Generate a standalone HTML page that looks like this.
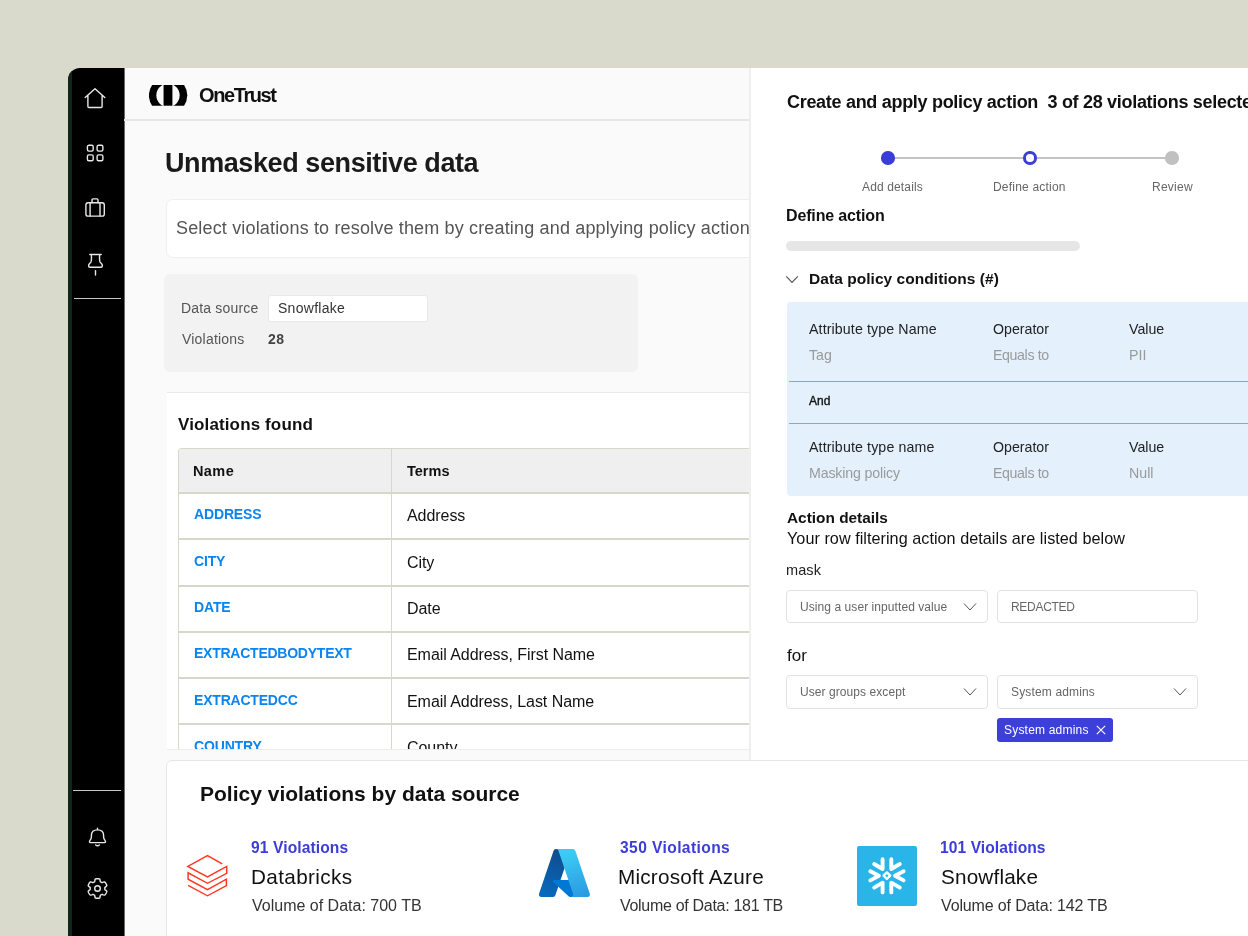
<!DOCTYPE html>
<html><head><meta charset="utf-8">
<style>
*{box-sizing:border-box;margin:0;padding:0}
html,body{width:1248px;height:936px;overflow:hidden;background:#d9d9cc;font-family:"Liberation Sans",sans-serif;color:#111;position:relative}
.abs{position:absolute}
.t{position:absolute;white-space:nowrap;line-height:1;will-change:transform}
</style></head><body>
<div class="abs" style="left:124px;top:68px;width:626px;height:868px;background:#fafafa"></div>
<div class="abs" style="left:124px;top:68px;width:1px;height:868px;background:#6a6a6a"></div>
<div class="abs" style="left:68px;top:68px;width:56px;height:868px;background:#000;border-top-left-radius:12px;overflow:hidden"><div class="abs" style="left:0;top:0;width:4.2px;height:868px;background:#10261a"></div></div>
<svg class="abs" style="left:84px;top:87px" width="22" height="22" viewBox="0 0 22 22"><path d="M1.2 10.6 L11 1.8 L20.8 10.6 M3.9 8.3 V19.5 Q3.9 20.5 4.9 20.5 H17.1 Q18.1 20.5 18.1 19.5 V8.3" fill="none" stroke="#e8e8e8" stroke-width="1.4" stroke-linejoin="round" stroke-linecap="round"/></svg>
<svg class="abs" style="left:85px;top:144px" width="20" height="19" viewBox="0 0 20 19"><rect x="2.4" y="1.2" width="5.8" height="5.9" rx="1.5" fill="none" stroke="#e8e8e8" stroke-width="1.4" stroke-linejoin="round" stroke-linecap="round"/><rect x="12.1" y="1.2" width="5.8" height="5.9" rx="1.5" fill="none" stroke="#e8e8e8" stroke-width="1.4" stroke-linejoin="round" stroke-linecap="round"/><rect x="2.4" y="10.9" width="5.8" height="5.9" rx="1.5" fill="none" stroke="#e8e8e8" stroke-width="1.4" stroke-linejoin="round" stroke-linecap="round"/><rect x="12.1" y="10.9" width="5.8" height="5.9" rx="1.5" fill="none" stroke="#e8e8e8" stroke-width="1.4" stroke-linejoin="round" stroke-linecap="round"/></svg>
<svg class="abs" style="left:84px;top:197px" width="22" height="22" viewBox="0 0 22 22"><rect x="1.9" y="5.8" width="18.4" height="13.3" rx="2.2" fill="none" stroke="#e8e8e8" stroke-width="1.4" stroke-linejoin="round" stroke-linecap="round"/><path d="M8.0 5.8 V2.9 Q8.0 1.9 9.0 1.9 H13.0 Q14.0 1.9 14.0 2.9 V5.8 M6.1 5.8 V19.1 M16.0 5.8 V19.1" fill="none" stroke="#e8e8e8" stroke-width="1.4" stroke-linejoin="round" stroke-linecap="round"/></svg>
<svg class="abs" style="left:86px;top:252.5px" width="18" height="24" viewBox="0 0 18 24"><path d="M3.8 1.5 H15.2 M5.3 1.5 Q5.8 6 5 9 Q2.6 11 2.6 12.8 Q2.6 14.3 4.1 14.3 H14.9 Q16.4 14.3 16.4 12.8 Q16.4 11 14 9 Q13.2 6 13.7 1.5 M9.5 17.6 V22.1" fill="none" stroke="#e8e8e8" stroke-width="1.4" stroke-linejoin="round" stroke-linecap="round"/></svg>
<div class="abs" style="left:73.5px;top:298.2px;width:47.5px;height:1.2px;background:#c8c8c8"></div>
<div class="abs" style="left:73px;top:789.6px;width:47.7px;height:1.2px;background:#c8c8c8"></div>
<svg class="abs" style="left:87px;top:827px" width="21" height="22" viewBox="0 0 21 22"><path d="M10.5 1.3 V2.6 M2.9 13.6 Q4.4 12.2 4.4 9.8 V8.6 Q4.4 2.9 10.5 2.9 Q16.6 2.9 16.6 8.6 V9.8 Q16.6 12.2 18.1 13.6 Q19.3 15.6 17.4 15.6 H3.6 Q1.7 15.6 2.9 13.6 Z M8.7 18 Q10.5 19.6 12.3 18" fill="none" stroke="#e8e8e8" stroke-width="1.4" stroke-linejoin="round" stroke-linecap="round"/></svg>
<svg class="abs" style="left:86.6px;top:878.2px" width="21" height="21" viewBox="0 0 21 21"><path d="M17.80 10.50 L17.79 10.82 L17.77 11.14 L17.83 11.47 L18.27 11.87 L18.93 12.37 L19.53 12.92 L19.81 13.43 L19.71 13.85 L19.55 14.25 L19.38 14.64 L19.19 15.03 L18.99 15.40 L18.77 15.77 L18.53 16.12 L18.27 16.47 L18.01 16.80 L17.69 17.09 L17.11 17.11 L16.33 16.86 L15.57 16.54 L15.00 16.37 L14.69 16.48 L14.42 16.66 L14.15 16.82 L13.87 16.98 L13.59 17.12 L13.33 17.33 L13.20 17.91 L13.10 18.73 L12.92 19.53 L12.61 20.03 L12.20 20.15 L11.78 20.22 L11.35 20.26 L10.93 20.29 L10.50 20.30 L10.07 20.29 L9.65 20.26 L9.22 20.22 L8.80 20.15 L8.39 20.03 L8.08 19.53 L7.90 18.73 L7.80 17.91 L7.67 17.33 L7.41 17.12 L7.13 16.98 L6.85 16.82 L6.58 16.66 L6.31 16.48 L6.00 16.37 L5.43 16.54 L4.67 16.86 L3.89 17.11 L3.31 17.09 L2.99 16.80 L2.73 16.47 L2.47 16.12 L2.23 15.77 L2.01 15.40 L1.81 15.03 L1.62 14.64 L1.45 14.25 L1.29 13.85 L1.19 13.43 L1.47 12.92 L2.07 12.37 L2.73 11.87 L3.17 11.47 L3.23 11.14 L3.21 10.82 L3.20 10.50 L3.21 10.18 L3.23 9.86 L3.17 9.53 L2.73 9.13 L2.07 8.63 L1.47 8.08 L1.19 7.57 L1.29 7.15 L1.45 6.75 L1.62 6.36 L1.81 5.97 L2.01 5.60 L2.23 5.23 L2.47 4.88 L2.73 4.53 L2.99 4.20 L3.31 3.91 L3.89 3.89 L4.67 4.14 L5.43 4.46 L6.00 4.63 L6.31 4.52 L6.58 4.34 L6.85 4.18 L7.13 4.02 L7.41 3.88 L7.67 3.67 L7.80 3.09 L7.90 2.27 L8.08 1.47 L8.39 0.97 L8.80 0.85 L9.22 0.78 L9.65 0.74 L10.07 0.71 L10.50 0.70 L10.93 0.71 L11.35 0.74 L11.78 0.78 L12.20 0.85 L12.61 0.97 L12.92 1.47 L13.10 2.27 L13.20 3.09 L13.33 3.67 L13.59 3.88 L13.87 4.02 L14.15 4.18 L14.42 4.34 L14.69 4.52 L15.00 4.63 L15.57 4.46 L16.33 4.14 L17.11 3.89 L17.69 3.91 L18.01 4.20 L18.27 4.53 L18.53 4.88 L18.77 5.23 L18.99 5.60 L19.19 5.97 L19.38 6.36 L19.55 6.75 L19.71 7.15 L19.81 7.57 L19.53 8.08 L18.93 8.63 L18.27 9.13 L17.83 9.53 L17.77 9.86 L17.79 10.18 Z" fill="none" stroke="#e8e8e8" stroke-width="1.4" stroke-linejoin="round" stroke-linecap="round"/><circle cx="10.5" cy="10.5" r="2.8" fill="none" stroke="#e8e8e8" stroke-width="1.4" stroke-linejoin="round" stroke-linecap="round"/></svg>
<div class="abs" style="left:124px;top:119px;width:626px;height:2px;background:#e6e6e6"></div>
<svg class="abs" style="left:148.95px;top:84.5px" width="39" height="21" viewBox="0 0 39 21"><path d="M3.1 0 H35.1 Q38.3 5 38.3 10.35 Q38.3 15.7 35.1 20.7 H3.1 Q-0.1 15.7 -0.1 10.35 Q-0.1 5 3.1 0 Z" fill="#000"/><ellipse cx="19" cy="10.35" rx="11.65" ry="11.75" fill="#f9f9f9"/><rect x="14.56" y="0" width="8.85" height="20.7" fill="#000"/></svg>
<div class="t" style="left:199.00px;top:84.87px;font-size:20px;font-weight:700;color:#111;letter-spacing:-1.4px;">OneTrust</div>
<div class="t" style="left:165.10px;top:150.14px;font-size:27px;font-weight:700;color:#1a1a1a;letter-spacing:-0.41px;">Unmasked sensitive data</div>
<div class="abs" style="left:166px;top:199px;width:590px;height:58.5px;background:#fff;border:1px solid #efefef;border-radius:7px"></div>
<div class="t" style="left:176.30px;top:218.76px;font-size:18px;color:#555;letter-spacing:0.16px;">Select violations to resolve them by creating and applying policy action</div>
<div class="abs" style="left:164px;top:274px;width:474px;height:97.5px;background:#f2f2f2;border-radius:6px"></div>
<div class="t" style="left:181.00px;top:300.75px;font-size:14px;color:#555;letter-spacing:0.18px;">Data source</div>
<div class="abs" style="left:267.5px;top:295px;width:160px;height:26.6px;background:#fff;border:1px solid #e9e9e9;border-radius:3px"></div>
<div class="t" style="left:278.00px;top:300.75px;font-size:14px;color:#333;letter-spacing:0.28px;">Snowflake</div>
<div class="t" style="left:181.60px;top:332.15px;font-size:14px;color:#555;letter-spacing:0.2px;">Violations</div>
<div class="t" style="left:268.00px;top:332.15px;font-size:14px;font-weight:700;color:#444;letter-spacing:0.5px;">28</div>
<div class="abs" style="left:167px;top:391.8px;width:600px;height:357.5px;background:#fff;border-top:1px solid #e9e9e9"></div>
<div class="t" style="left:178.40px;top:415.61px;font-size:17px;font-weight:700;color:#111;letter-spacing:0.13px;">Violations found</div>
<div class="abs" style="left:177.9px;top:448.2px;width:600px;height:302px;border:1.3px solid #d8d8ca;border-bottom:none;border-top-left-radius:4px;overflow:hidden;background:#fff"></div>
<div class="abs" style="left:178.8px;top:449.0px;width:600px;height:44px;background:#efefef;border-top-left-radius:3px"></div>
<div class="abs" style="left:177.8px;top:492.3px;width:600px;height:1.4px;background:#d8d8ca"></div>
<div class="abs" style="left:390.8px;top:449.0px;width:1.3px;height:300px;background:#d8d8ca"></div>
<div class="t" style="left:193.00px;top:463.73px;font-size:14.5px;font-weight:700;color:#111;letter-spacing:0.4px;">Name</div>
<div class="t" style="left:406.90px;top:463.73px;font-size:14.5px;font-weight:700;color:#111;">Terms</div>
<div class="abs" style="left:177.8px;top:538.25px;width:600px;height:1.5px;background:#d8d8ca"></div>
<div class="t" style="left:193.60px;top:507.45px;font-size:14px;font-weight:700;color:#0a84f0;letter-spacing:-0.15px;">ADDRESS</div>
<div class="t" style="left:406.90px;top:508.46px;font-size:16px;color:#111;letter-spacing:-0.06px;">Address</div>
<div class="abs" style="left:177.8px;top:585.25px;width:600px;height:1.5px;background:#d8d8ca"></div>
<div class="t" style="left:193.60px;top:553.72px;font-size:14px;font-weight:700;color:#0a84f0;letter-spacing:-0.15px;">CITY</div>
<div class="t" style="left:406.90px;top:554.73px;font-size:16px;color:#111;letter-spacing:-0.06px;">City</div>
<div class="abs" style="left:177.8px;top:631.25px;width:600px;height:1.5px;background:#d8d8ca"></div>
<div class="t" style="left:193.60px;top:599.99px;font-size:14px;font-weight:700;color:#0a84f0;letter-spacing:-0.15px;">DATE</div>
<div class="t" style="left:406.90px;top:601.00px;font-size:16px;color:#111;letter-spacing:-0.06px;">Date</div>
<div class="abs" style="left:177.8px;top:677.25px;width:600px;height:1.5px;background:#d8d8ca"></div>
<div class="t" style="left:193.60px;top:646.26px;font-size:14px;font-weight:700;color:#0a84f0;letter-spacing:-0.245px;">EXTRACTEDBODYTEXT</div>
<div class="t" style="left:406.90px;top:647.27px;font-size:16px;color:#111;letter-spacing:-0.06px;">Email Address, First Name</div>
<div class="abs" style="left:177.8px;top:723.25px;width:600px;height:1.5px;background:#d8d8ca"></div>
<div class="t" style="left:193.60px;top:692.53px;font-size:14px;font-weight:700;color:#0a84f0;letter-spacing:-0.2px;">EXTRACTEDCC</div>
<div class="t" style="left:406.90px;top:693.54px;font-size:16px;color:#111;letter-spacing:-0.06px;">Email Address, Last Name</div>
<div class="t" style="left:193.60px;top:738.80px;font-size:14px;font-weight:700;color:#0a84f0;letter-spacing:-0.15px;">COUNTRY</div>
<div class="t" style="left:406.90px;top:739.81px;font-size:16px;color:#111;letter-spacing:-0.06px;">County</div>
<div class="abs" style="left:125px;top:749.5px;width:625px;height:11px;background:#fafafa"></div>
<div class="abs" style="left:167px;top:749px;width:583px;height:1px;background:#ededed"></div>
<div class="abs" style="left:749px;top:68px;width:499px;height:692px;background:#fff;border-left:2px solid #efefef"></div>
<div class="t" style="left:786.60px;top:93.06px;font-size:18px;font-weight:700;color:#111;letter-spacing:-0.3px;">Create and apply policy action&nbsp; 3 of 28 violations selected</div>
<div class="abs" style="left:888px;top:157.4px;width:284px;height:1.2px;background:#c4c4c4"></div>
<div class="abs" style="left:881.2px;top:151.3px;width:13.5px;height:13.5px;background:#3b3dd6;border-radius:50%"></div>
<div class="abs" style="left:1023.3px;top:151.3px;width:13.5px;height:13.5px;background:#fff;border:3.1px solid #3b3dd6;border-radius:50%"></div>
<div class="abs" style="left:1165px;top:151.3px;width:13.5px;height:13.5px;background:#c0c0c0;border-radius:50%"></div>
<div class="t" style="left:862.30px;top:180.64px;font-size:12px;color:#666;letter-spacing:0.14px;">Add details</div>
<div class="t" style="left:992.80px;top:180.64px;font-size:12px;color:#666;letter-spacing:0.2px;">Define action</div>
<div class="t" style="left:1152.00px;top:180.64px;font-size:12px;color:#666;letter-spacing:0.25px;">Review</div>
<div class="t" style="left:786.20px;top:207.96px;font-size:16px;font-weight:700;color:#111;letter-spacing:-0.15px;">Define action</div>
<div class="abs" style="left:786.3px;top:241.0px;width:294.2px;height:9.9px;background:#e6e6e6;border-radius:5px"></div>
<svg class="abs" style="left:785px;top:274px" width="16" height="12" viewBox="0 0 16 12"><path d="M1.25 2.4 L7 8.5 L12.8 2.4" fill="none" stroke="#555" stroke-width="1.1"/></svg>
<div class="t" style="left:809.00px;top:270.88px;font-size:15.5px;font-weight:700;color:#111;letter-spacing:0.05px;">Data policy conditions (#)</div>
<div class="abs" style="left:786.7px;top:301.7px;width:470px;height:194.3px;background:#e4f1fd;border-radius:4px"></div>
<div class="abs" style="left:789px;top:380.5px;width:470px;height:1.5px;background:#64b1f6"></div>
<div class="abs" style="left:789px;top:422.8px;width:470px;height:1.5px;background:#64b1f6"></div>
<div class="t" style="left:809.40px;top:321.78px;font-size:14.2px;color:#222;letter-spacing:0.12px;">Attribute type Name</div>
<div class="t" style="left:992.80px;top:321.78px;font-size:14.2px;color:#222;">Operator</div>
<div class="t" style="left:1129.20px;top:321.78px;font-size:14.2px;color:#222;">Value</div>
<div class="t" style="left:809.40px;top:348.18px;font-size:14.2px;color:#9a9a9a;">Tag</div>
<div class="t" style="left:992.80px;top:348.18px;font-size:14.2px;color:#9a9a9a;letter-spacing:-0.38px;">Equals to</div>
<div class="t" style="left:1129.20px;top:348.18px;font-size:14.2px;color:#9a9a9a;">PII</div>
<div class="t" style="left:809.40px;top:439.98px;font-size:14.2px;color:#222;letter-spacing:0.13px;">Attribute type name</div>
<div class="t" style="left:992.80px;top:439.98px;font-size:14.2px;color:#222;">Operator</div>
<div class="t" style="left:1129.20px;top:439.98px;font-size:14.2px;color:#222;">Value</div>
<div class="t" style="left:809.40px;top:465.98px;font-size:14.2px;color:#9a9a9a;letter-spacing:-0.15px;">Masking policy</div>
<div class="t" style="left:992.80px;top:465.98px;font-size:14.2px;color:#9a9a9a;letter-spacing:-0.38px;">Equals to</div>
<div class="t" style="left:1129.20px;top:465.98px;font-size:14.2px;color:#9a9a9a;">Null</div>
<div class="t" style="left:809.40px;top:394.84px;font-size:12px;color:#111;-webkit-text-stroke:0.35px #111;">And</div>
<div class="t" style="left:786.80px;top:509.66px;font-size:15.4px;font-weight:700;color:#111;">Action details</div>
<div class="t" style="left:786.80px;top:530.09px;font-size:16.2px;color:#111;letter-spacing:0.04px;">Your row filtering action details are listed below</div>
<div class="t" style="left:786.20px;top:562.53px;font-size:14.5px;color:#222;letter-spacing:0.1px;">mask</div>
<div class="abs" style="left:786.2px;top:589.8px;width:201.4px;height:33.2px;background:#fff;border:1px solid #e2e2e2;border-radius:4px"></div>
<div class="t" style="left:800.30px;top:601.24px;font-size:12px;color:#666;letter-spacing:0.07px;">Using a user inputted value</div>
<svg class="abs" style="left:963px;top:601.5px" width="14" height="10" viewBox="0 0 14 10"><path d="M1 1.5 L7 8 L13 1.5" fill="none" stroke="#555" stroke-width="1.0"/></svg>
<div class="abs" style="left:996.9px;top:589.8px;width:201.5px;height:33.2px;background:#fff;border:1px solid #e2e2e2;border-radius:4px"></div>
<div class="t" style="left:1010.60px;top:601.24px;font-size:12px;color:#666;letter-spacing:-0.3px;">REDACTED</div>
<div class="t" style="left:786.60px;top:646.81px;font-size:17px;color:#111;">for</div>
<div class="abs" style="left:786.2px;top:675px;width:201.4px;height:33.6px;background:#fff;border:1px solid #e2e2e2;border-radius:4px"></div>
<div class="t" style="left:800.30px;top:686.44px;font-size:12px;color:#666;letter-spacing:0.07px;">User groups except</div>
<svg class="abs" style="left:963px;top:687px" width="14" height="10" viewBox="0 0 14 10"><path d="M1 1.5 L7 8 L13 1.5" fill="none" stroke="#555" stroke-width="1.0"/></svg>
<div class="abs" style="left:996.9px;top:675px;width:201.5px;height:33.6px;background:#fff;border:1px solid #e2e2e2;border-radius:4px"></div>
<div class="t" style="left:1010.60px;top:686.44px;font-size:12px;color:#666;letter-spacing:0.15px;">System admins</div>
<svg class="abs" style="left:1173px;top:687px" width="14" height="10" viewBox="0 0 14 10"><path d="M1 1.5 L7 8 L13 1.5" fill="none" stroke="#555" stroke-width="1.0"/></svg>
<div class="abs" style="left:997.4px;top:718px;width:115.3px;height:24px;background:#3c3fd8;border-radius:3px"></div>
<div class="t" style="left:1003.80px;top:723.84px;font-size:12px;color:#fff;letter-spacing:0.2px;">System admins</div>
<svg class="abs" style="left:1095px;top:724px" width="12" height="12" viewBox="0 0 12 12"><path d="M1.8 1.8 L10.2 10.2 M10.2 1.8 L1.8 10.2" stroke="#fff" stroke-width="1.1"/></svg>
<div class="abs" style="left:166px;top:760px;width:1090px;height:200px;background:#fff;border:1px solid #e6e6e6;border-top-left-radius:6px"></div>
<div class="t" style="left:199.60px;top:783.22px;font-size:21px;font-weight:700;color:#111;">Policy violations by data source</div>
<div class="t" style="left:251.00px;top:840.29px;font-size:15.6px;font-weight:700;color:#3b3dd6;letter-spacing:0.1px;">91 Violations</div>
<div class="t" style="left:250.50px;top:866.68px;font-size:20.7px;color:#111;letter-spacing:0.38px;">Databricks</div>
<div class="t" style="left:252.00px;top:898.06px;font-size:16px;color:#333;">Volume of Data: 700 TB</div>
<div class="t" style="left:619.60px;top:840.29px;font-size:15.6px;font-weight:700;color:#3b3dd6;letter-spacing:0.4px;">350 Violations</div>
<div class="t" style="left:618.00px;top:866.68px;font-size:20.7px;color:#111;letter-spacing:0.22px;">Microsoft Azure</div>
<div class="t" style="left:620.00px;top:898.06px;font-size:16px;color:#333;letter-spacing:-0.3px;">Volume of Data: 181 TB</div>
<div class="t" style="left:940.00px;top:840.29px;font-size:15.6px;font-weight:700;color:#3b3dd6;letter-spacing:0.07px;">101 Violations</div>
<div class="t" style="left:940.50px;top:866.68px;font-size:20.7px;color:#111;letter-spacing:0.18px;">Snowflake</div>
<div class="t" style="left:941.00px;top:898.06px;font-size:16px;color:#333;letter-spacing:-0.14px;">Volume of Data: 142 TB</div>
<svg class="abs" style="left:180px;top:850px" width="55" height="52" viewBox="0 0 55 52"><path d="M42.2 13.9 L27.5 5.6 L7.8 16.4 L27.5 26.9 L46.7 16.4 L46.7 23.3 L27.5 33.3 L8.1 22.8 L8.1 29.2 L27.5 39.7 L46.4 29.2 L46.4 35.6 L27.5 45.8 L8.1 35.3" fill="none" stroke="#ff3621" stroke-width="1.45" stroke-linejoin="miter" stroke-miterlimit="10"/></svg>
<svg class="abs" style="left:530px;top:840px" width="70" height="62" viewBox="0 0 70 62">
<defs><linearGradient id="aza" gradientUnits="userSpaceOnUse" x1="58.972" y1="12.27" x2="32.259" y2="91.186"><stop offset="0" stop-color="#114a8b"/><stop offset="1" stop-color="#0669bc"/></linearGradient>
<linearGradient id="azb" gradientUnits="userSpaceOnUse" x1="67.319" y1="48.99" x2="61.14" y2="51.08"><stop offset="0" stop-opacity=".3"/><stop offset=".071" stop-opacity=".2"/><stop offset=".321" stop-opacity=".1"/><stop offset=".623" stop-opacity=".05"/><stop offset="1" stop-opacity="0"/></linearGradient>
<linearGradient id="azc" gradientUnits="userSpaceOnUse" x1="63.938" y1="9.97" x2="89.98" y2="98.93"><stop offset="0" stop-color="#3ccbf4"/><stop offset="1" stop-color="#2892df"/></linearGradient></defs>
<g transform="translate(6.6 5.1) scale(0.58)">
<path d="M33.338 6.544h26.038l-27.03 80.087a4.152 4.152 0 0 1-3.933 2.824H8.149a4.145 4.145 0 0 1-3.928-5.47L29.404 9.368a4.152 4.152 0 0 1 3.934-2.825z" fill="url(#aza)"/>
<path d="M71.175 60.261h-41.29a1.911 1.911 0 0 0-1.305 3.309l26.532 24.764a4.171 4.171 0 0 0 2.846 1.121h23.38z" fill="#0078d4"/>
<path d="M33.338 6.544a4.118 4.118 0 0 0-3.943 2.879L4.252 83.917a4.14 4.14 0 0 0 3.908 5.538h20.787a4.443 4.443 0 0 0 3.41-2.9l5.014-14.777 17.91 16.705a4.237 4.237 0 0 0 2.666.972H81.24L71.024 60.261l-29.781.007L59.47 6.544z" fill="url(#azb)"/>
<path d="M66.595 9.364a4.145 4.145 0 0 0-3.928-2.82H33.648a4.146 4.146 0 0 1 3.928 2.82l25.184 74.62a4.146 4.146 0 0 1-3.928 5.472h29.02a4.146 4.146 0 0 0 3.927-5.472z" fill="url(#azc)"/>
</g></svg>
<div class="abs" style="left:857px;top:846px;width:60px;height:60px;background:#29b5e8;border-radius:2px"></div>
<svg class="abs" style="left:865px;top:855px" width="44" height="44" viewBox="0 0 44 44"><path d="M17.6 4.2 V14.0 L9.2 9.0 M26.3 4.2 V14.0 L34.8 9.0 M5.3 16.3 L13.9 20.7 L5.3 25.4 M38.6 16.3 L30.0 20.7 L38.6 25.4 M17.6 37.4 V27.6 L9.2 32.6 M26.3 37.4 V27.6 L34.8 32.6" fill="none" stroke="#fff" stroke-width="3.9" stroke-linecap="round" stroke-linejoin="round"/><path d="M21.9 17.4 L25.2 20.7 L21.9 24.0 L18.6 20.7 Z" fill="none" stroke="#fff" stroke-width="2.4" stroke-linejoin="round"/></svg>
</body></html>
